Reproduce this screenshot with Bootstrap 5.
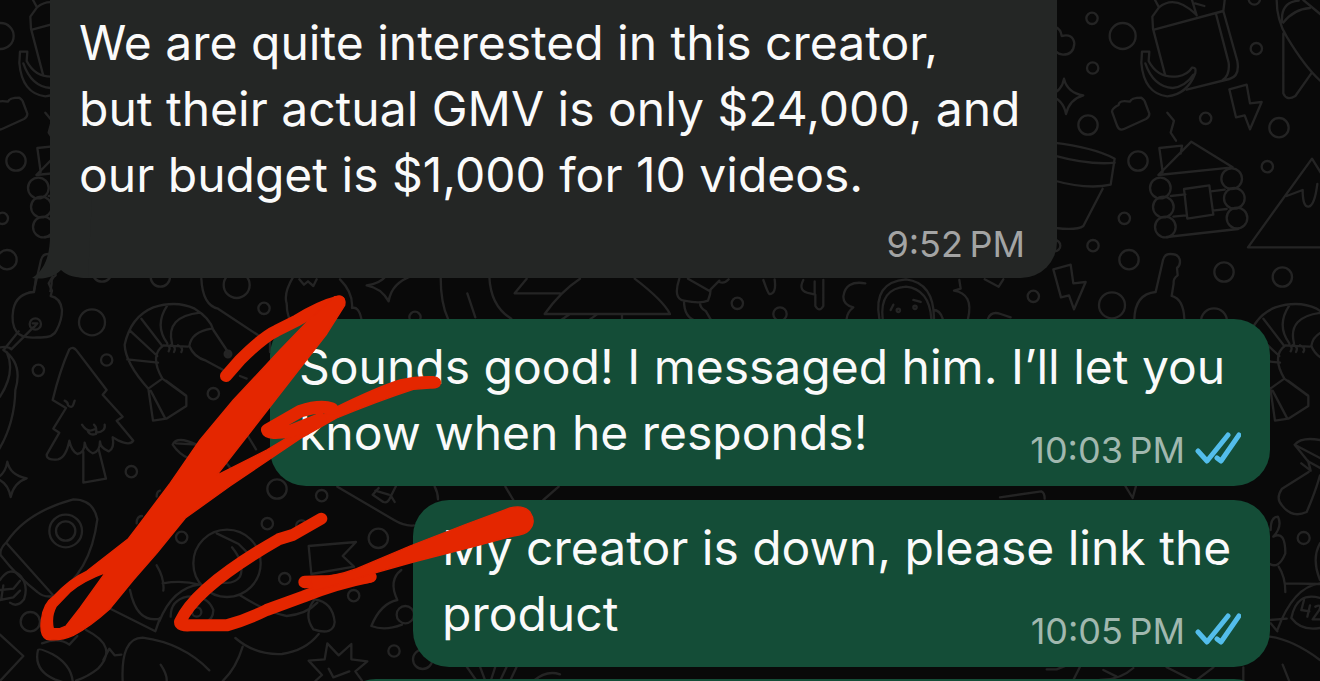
<!DOCTYPE html>
<html lang="en">
<head>
<meta charset="utf-8">
<meta name="viewport" content="width=device-width, initial-scale=1">
<title>Chat</title>
<link href="https://cdn.jsdelivr.net/npm/bootstrap@5.3.0/dist/css/bootstrap.min.css" rel="stylesheet">
<style>
  body { background: #090909; font-family: Inter, "Liberation Sans", sans-serif; }
  .chat { height: 100vh; padding: 0 50px; }
  .layer { pointer-events: none; overflow: visible; }
  .doodles { fill: none; stroke: #242424; stroke-width: 7; stroke-linecap: round; stroke-linejoin: round; }
  .marker { fill: none; stroke: #e42600; stroke-linecap: round; stroke-linejoin: round; }
  .marker .solid { fill: #e42600; }
  .bubble { border-radius: 36px; padding: 15px 29px 20px; color: #fafafa; font-size: 48px; line-height: 66px; }
  .bubble-in { background: #242625; width: 1007px; max-width: 100%; padding: 10px 32px 8px 29px; border-radius: 0 0 36px 36px; }
  .bubble-out { background: #144d37; max-width: 100%; }
  .wide { width: 1000px; }
  .medium { width: 857px; }
  .bubble-next { width: 930px; height: 80px; margin-top: 12px; }
  .stamp { font-size: 36px; line-height: 44px; color: #a3a4a4; }
  .bubble-in .stamp { margin-top: 14px; padding-bottom: 4px; }
  .bubble-out .stamp { color: #a1b8af; margin-top: -38px; margin-bottom: -6px; }
  .gap-day { margin-top: 41px; }
  .gap-msg { margin-top: 14px; }
  .tail { left: -18px; bottom: 0; }
  .ticks { fill: none; stroke: #53bdeb; stroke-width: 5; stroke-linecap: round; stroke-linejoin: round; margin: 0 0 4px 10px; }
</style>
</head>
<body>
<main class="chat position-relative overflow-hidden">
  <svg class="layer doodles position-absolute top-0 start-0 w-100" viewBox="0 0 1320 681" aria-hidden="true">
    <defs>
      <g id="tile">
        <!-- upper right part of the wallpaper -->
        <g transform="translate(1020 0) scale(.33333)">
          <circle cx="216" cy="55" r="17"/><circle cx="308" cy="108" r="39"/><circle cx="218" cy="204" r="17"/>
          <circle cx="204" cy="375" r="29"/><circle cx="354" cy="483" r="29"/><circle cx="313" cy="655" r="17"/>
          <circle cx="219" cy="737" r="17"/><circle cx="104" cy="737" r="17"/><circle cx="327" cy="779" r="29"/><circle cx="557" cy="355" r="17"/>
          <circle cx="709" cy="146" r="17"/><circle cx="777" cy="383" r="29"/><circle cx="742" cy="500" r="17"/>
          <circle cx="612" cy="816" r="29"/><circle cx="787" cy="831" r="29"/><circle cx="40" cy="889" r="17"/>
          <circle cx="276" cy="916" r="39"/><circle cx="703" cy="-3" r="17"/><circle cx="582" cy="964" r="39"/>
          <path d="M105 80q18 8 20 28q34-8 38 22q-2 34-34 34q-14-2-22-10"/>
          <path d="M132 236q10 42 58 50q-42 12-52 56q-8-44-50-56q38-12 44-50z"/>
          <path d="M405 0l12 22l-20 28l2 36l36 138M417 22q48-40 112 22M405 88l205-55l5-40M516 0l14 46M525 10l28 8M588 42l38 146q4 38-18 52M610 33l42 150q8 46-24 54l-128 32"/>
          <path d="M366 155h22l-2 28q28 54 88 46q28-4 42-26q14-2 10 16q-24 64-84 70q-70-8-78-100zM376 190q24 70 82 74q38-4 62-40"/>
          <path d="M276 335q0-10 20-20q0-16 34-10q4-12 34-12q10 6 12 16l12 32q0 10-10 16l-66 30q-14 6-20-8z"/>
          <path d="M442 338l20 24l-10 36l16 24"/>
          <path d="M628 268l52-14l10 56l35-4l-35 82l-16-42l-26 6z"/>
          <path d="M415 525L514 425l124 77zM428 516l-10-72l68-7l-4 24"/>
          <circle cx="421" cy="564" r="31"/><circle cx="430" cy="621" r="31"/><circle cx="436" cy="681" r="31"/>
          <circle cx="635" cy="536" r="31"/><circle cx="643" cy="595" r="31"/><circle cx="651" cy="654" r="31"/>
          <path d="M492 567l76-11l12 88l-78 12zM452 588l44-5M460 650l38-4M572 574l42-5M578 632l42-5M440 711l214-24"/>
          <path d="M100 428q120 14 184 48l-12 78q-70 16-176-14M100 466q110 30 184 22M248 566l-58 112q-20 14-84 6"/>
          <path d="M684 742L876 476L960 610M684 742H960M800 588l48-18q0 52 18 50q18-4 26-68"/>
          <path d="M100 808l52-14l8 56l37-4l-35 82l-15-42l-24 6z"/>
          <path d="M343 958q2-76 64-82l22-96q4-18 22-18q24 0 28 16q4 16-8 26l2 22q-14 10-12 24l-6 38q36 10 38 70"/>
          <path d="M770 0q0 60 30 110q60 100 110 140M786 66q-4-60 50-64M790 68q30-40 80-44M850 0l60 50M790 100v180q10 24 36 8l48-68"/>
        </g>
        <!-- lower left part of the wallpaper -->
        <g transform="translate(0 270) scale(.33333)">
          <path d="M108 22l-6 44q-52 4-62 52q-8 44 10 68q16 20 60 16q50 4 60-22q16-30 16-60q-4-36-34-42l4-16l-10-22l12-20"/>
          <circle cx="106" cy="162" r="17"/><path d="M98 160h14l-10 12M100 172l-64 64M56 184l-42 52M0 232q26-4 34 6M10 240q60 40 36 120q-2 100-50 180M20 246q28 60-20 134"/>
          <circle cx="276" cy="157" r="39"/><circle cx="320" cy="270" r="17"/><circle cx="115" cy="301" r="17"/><circle cx="710" cy="45" r="39"/>
          <circle cx="792" cy="115" r="17"/><circle cx="640" cy="371" r="17"/><circle cx="394" cy="605" r="17"/>
          <path d="M158 390Q180 300 208 238q12-10 22 4l90 118l-12 14l60 66l-18 12l50 60q-10 16-44 0l-18-10q6 34-12 42q-26-10-26-30q0 32-22 36q-20-10-24-32q0 30-22 34q-18-10-24-40q-10 50-34 56q-34 4-34-14l38-66l-18-12l38-62zM194 392q10 4 10 14q12 10 16-2l4-12M246 464q16 26 38 14M262 480q6 18 26 12q4-18-6-28M314 464q4 20-24 24M250 546v92l68-12l-22-88"/>
          <path d="M22 575q8 40 58 50q-38 12-48 56q-8-44-44-56q28-12 34-50z"/>
          <path d="M445 356Q376 280 374 224Q392 140 460 112Q530 90 584 116Q630 144 640 180l44 66M445 356l42-30l72 52v30l-60 38l-40 6zM452 362l44 84M498 332l60 44M487 326q-40-70 4-100l72 4M390 182l82 76M424 146l60 78M382 268l92 10M502 106q-40 60 0 114M516 220q-20-80 84-92M634 176q-60 10-66 52q14 34 50 44l56 30M500 226q14 4 6 18M514 224q16 8 8 22M534 226q18 8 10 20M720 318l20 8"/><circle cx="684" cy="252" r="10" fill="#242424"/>
          <path d="M604 26q4 80 50 90l130 86M810 216v30"/>
          <path d="M590 524q-60-28-72 0q20 30 50 42M590 524l-62-4M740 492l28 46M680 580l20 26"/>
          <path d="M20 816q60-90 200-128q60 0 72 60q-20 160-130 230q-30 6-50-12q-60-46-110-110q-4-20 18-40zM20 820l138 154"/>
          <circle cx="197" cy="783" r="49"/><circle cx="197" cy="783" r="29"/>
          <path d="M0 930q30-44 62-12q24 30 10 70q-20 26-42 10M0 960l40-4l20-24M0 990l40-8l20-20M10 946l-6 40"/>
          <circle cx="91" cy="1055" r="29"/><circle cx="545" cy="802" r="17"/><circle cx="802" cy="761" r="17"/><circle cx="831" cy="657" r="29"/><circle cx="854" cy="926" r="17"/>
          <circle cx="681" cy="880" r="101"/><path d="M650 790l66 32l40 40M696 832q40 50 24 88q-20 26-60 16"/>
          <path d="M410 760q0-22 16-22M470 680q0-16 10-18M470 886q24 40 20 76M390 960q20 100 90 86M488 940q60-10 110 4q-80 10-120 110M334 1018l132 66l14-40"/>
          <path d="M512 1040q0-50 50-60q60-6 78 40q0 30-26 36"/><circle cx="590" cy="1026" r="14"/>
          <path d="M720 976q80 50 140 62q60-6 92-40M706 1104q60 52 140 48q70-10 110-60M728 1130q-20 66-60 103"/>
          <path d="M114 1140q-14 60 50 88q50 20 54 5q-6-50-60-80q-40-20-44-13zM126 1120q50-20 82 4l24-26M258 1080q100 50 36 116q-30 24-66 36M310 1170l18-34l16 20l20-2M368 1233q-6-130 60-130q120 16 200 98M482 1184q20 30 18 50M0 1094l70 64l-70 75"/>
        </g>
        <!-- middle part, between and below the messages -->
        <g transform="translate(260 270) scale(.33333)">
          <circle cx="185" cy="677" r="17"/><circle cx="355" cy="805" r="29"/>
          <circle cx="281" cy="977" r="17"/><circle cx="402" cy="1143" r="17"/><circle cx="465" cy="142" r="17"/><circle cx="488" cy="1168" r="29"/><circle cx="125" cy="768" r="17"/>
          <path d="M100 20q-30 50-20 80q0 40 20 70M118 28l14 16l12-10l16 14l10-20M240 28q40 40 36 86q20-6 28 32M320 46q40-4 60-30h80q-66 22-74 78q-22-40-66-48zM542 20q0 80 22 126M622 70l24 72M688 20q4 90 66 126"/>
          <path d="M232 650l170 100q34 20 60 16M356 654l-18 20l32 22q12 4 18-8l20-40M346 662l40 12M392 676l12 20M524 650q10 18 10 38M736 650l24 40M850 690l46-40"/>
          <path d="M154 912l-8-84l142-12l-40 42l34 32zM424 900q-40 30-12 90q-50 10-78 78q40 16 92-4"/>
          <circle cx="436" cy="1034" r="26"/><path d="M164 988q-36 46-4 90q60 20 64-22q-6-60-60-68z"/>
          <path d="M166 1233l20-18l-40-43l48-4l8-48l34 36l38-34v46l48 6l-36 30l20 28M206 1196l14 26l48-18M620 1190l30 43M660 1190l16 43M706 1190l-14 43M740 1190l-20 43M770 1190l-20 43M820 1233q40-34 80-20"/>
        </g>
        <g transform="translate(340 260) scale(.33333)">
          <path d="M560 56l-36 44h136M720 56q-60 40-106 106h376q-20-40-106-106M690 162l-30 20M770 164l-20 14M846 164v14M1018 56q-20 60 14 66q50 10 72 0q8-20 8-34l26-26M1044 56l66 38M1032 122q0 50 36 60M1080 128q0 16 18 26l14 24M1138 66q16 6 28-8M1270 60q14 40 18 42q22 0 16-44"/><circle cx="1192" cy="130" r="17"/><circle cx="1320" cy="162" r="20"/>
        </g>
        <g transform="translate(780 220) scale(.33333)">
          <path d="M70 180q-18 34 20 40l16 4v34q12 20 24 0v-78M104 184v40M256 190q-60-10-66 40q0 24 30 32q-18 14-20 34M298 296q-20-110 80-118q84 10 84 118M308 296q-10-90 70-96q70 8 76 96M460 270q20 0 28 26M340 254l-8 16M400 240l22 6M538 180l4 26l-20 6q60 10 42 84M614 178l42 22l14-22M624 296q10-24 38-14l30 10"/>
          <circle cx="355" cy="271" r="5"/><circle cx="405" cy="262" r="5"/>
        </g>
        <g transform="translate(1000 420) scale(.33333)">
          <path d="M0 232l124-18q10 4 10 22M376 198l22 36l10-36"/>
          <path d="M960 60q-56-10-76 14l40 50l40 22M884 74l76 40M904 130l28 22l-8-30M926 156l-80 50q-20 30 0 50q30 40 74 20q26-60 40-110"/>
          <path d="M812 330q0-40 22-40q14 30-14 60q36-20 36 50q-20 50-50 30M836 440q20 30 20 76M856 490l104 2M960 490q-80 10-128 140M810 600l50-4M812 610l20 24M810 650q70 10 150 70M848 734l20 50M960 370q-26 46 0 110M960 534q-70-20-86 60q30 40 86 30"/>
          <path d="M912 540l-8 30l24 4M930 556l-8 34M946 560q20-10 12 10l-20 28h22"/><circle cx="911" cy="354" r="18"/>
          <path d="M140 748l30 0l50-20M220 780l20-40M300 780q60 0 100-36M350 770l-40-20M500 742l80 40M590 780l50-38M730 742v40"/>
        </g>
      </g>
    </defs>
    <use href="#tile"/>
    <!-- the pattern repeats past both edges -->
    <svg x="0" y="0" width="200" height="292" viewBox="0 0 200 292" overflow="hidden"><use href="#tile" x="-1122"/></svg>
    <svg x="1240" y="296" width="80" height="129" viewBox="1240 296 80 129" overflow="hidden"><use href="#tile" x="1122"/></svg>
  </svg>

  <div class="d-flex flex-column position-relative">
    <article class="bubble bubble-in position-relative align-self-start">
      <svg class="tail layer position-absolute" width="60" height="80" viewBox="32 198 60 80" fill="#242625" aria-hidden="true"><path d="M50 198V236C50 256 44 271 32 278C44 280 54 277 61 270C67 276 76 278 88 278L92 198Z"/></svg>
      <p class="position-relative mb-0">We are quite interested in this creator,<br>but their actual GMV is only $24,000, and<br>our budget is $1,000 for 10 videos.</p>
      <div class="stamp text-end"><time datetime="21:52">9:52&#8239;PM</time></div>
    </article>

    <article class="bubble bubble-out wide align-self-end gap-day">
      <p class="mb-0">Sounds good! I messaged him. I’ll let you<br>know when he responds!</p>
      <div class="stamp d-flex justify-content-end align-items-center"><time datetime="22:03">10:03&#8239;PM</time>
        <svg class="ticks" width="46" height="32" viewBox="0 0 46 32" role="img" aria-label="Read"><path d="M3 19l9 10L33 3M22 26l4 3L44 3"/></svg></div>
    </article>

    <article class="bubble bubble-out medium align-self-end gap-msg">
      <p class="mb-0">My creator is down, please link the<br>product</p>
      <div class="stamp d-flex justify-content-end align-items-center"><time datetime="22:05">10:05&#8239;PM</time>
        <svg class="ticks" width="46" height="32" viewBox="0 0 46 32" role="img" aria-label="Read"><path d="M3 19l9 10L33 3M22 26l4 3L44 3"/></svg></div>
    </article>

    <article class="bubble bubble-out bubble-next align-self-end"></article>
  </div>

  <!-- hand-drawn red marker strokes over the messages -->
  <svg class="layer marker position-absolute top-0 start-0 w-100" viewBox="0 0 1320 681" aria-hidden="true">
    <g transform="translate(0 270) scale(.33333)">
      <path stroke-width="36" d="M678 318L720 270Q790 200 830 182L890 152Q960 108 1018 94"/>
      <path class="solid" stroke-width="4" d="M1004 80Q1040 74 1034 106L980 192L650 616L800 540L900 480L1000 416Q1130 352 1200 330Q1250 318 1300 320Q1326 324 1320 344Q1314 356 1290 354L1240 358Q1130 394 1010 444L900 506L690 648L556 744L470 850L400 930L330 1016Q270 1070 220 1096Q180 1114 140 1108Q118 1098 124 1050Q130 1000 160 980Q210 926 260 904L385 806L420 760L510 640L600 510L700 390L840 240L935 142ZM316 908Q250 932 210 966L168 1010Q152 1040 160 1076Q180 1078 198 1068L240 1014Z"/>
      <path stroke-width="38" d="M996 416Q960 404 900 424L802 480Q806 494 870 484L960 448"/>
      <path stroke-width="36" d="M964 746L880 794L836 808Q700 886 620 956Q560 1010 540 1056Q540 1068 570 1066H680Q740 1050 800 1020L910 980Q1010 940 1112 920"/>
      <path stroke-width="38" d="M914 936L990 934L1106 920"/>
      <path class="solid" stroke-width="4" d="M930 924Q1000 922 1070 896L1230 828L1400 762L1530 714Q1570 704 1590 726Q1610 756 1588 780Q1576 794 1540 798L1420 830L1240 876L1120 910L940 964Z"/>
    </g>
  </svg>
</main>
<script src="https://cdn.jsdelivr.net/npm/bootstrap@5.3.0/dist/js/bootstrap.bundle.min.js"></script>
</body>
</html>
